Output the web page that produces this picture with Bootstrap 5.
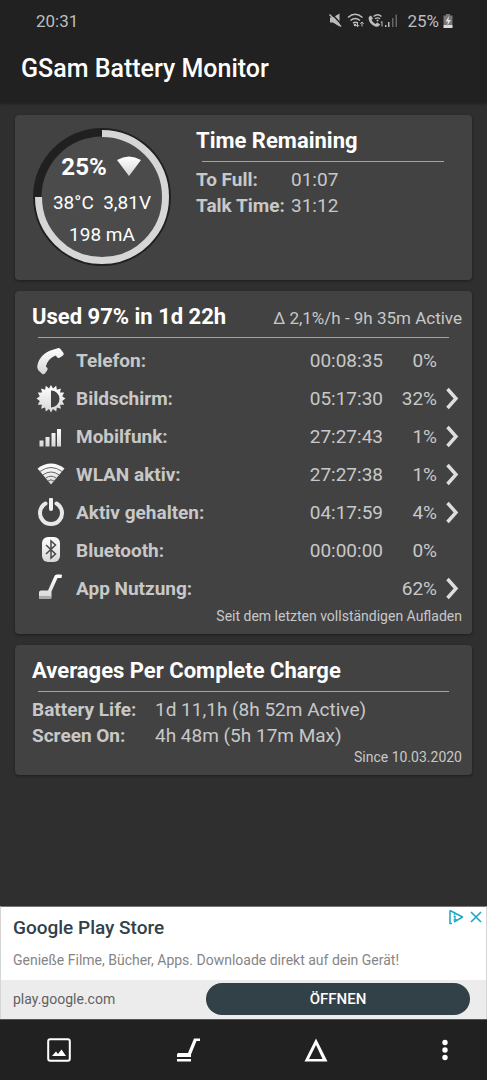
<!DOCTYPE html>
<html lang="de">
<head>
<meta charset="utf-8">
<meta name="viewport" content="width=device-width, initial-scale=1">
<title>GSam Battery Monitor</title>
<link href="https://cdn.jsdelivr.net/npm/bootstrap@5.3.0/dist/css/bootstrap.min.css" rel="stylesheet">
<style>
  body { background: #2f2f2f; color: #c8c8c8; font-family: Roboto, "Liberation Sans", sans-serif; font-size: 19px; line-height: 26px; }
  svg { display: block; flex: none; }
  .bar-dark { background: #212121; }
  .app-header { height: 103px; box-shadow: 0 1px 3px rgba(0,0,0,.35); }
  .status-row { height: 42px; padding: 0 34px 0 36px; font-size: 17px; color: #bdbdbd; }
  .app-title { font-size: 25px; font-weight: 500; line-height: 54px; padding-left: 21px; color: #fff; }
  .panels { padding: 12px 15px 0; gap: 11px; }
  .panel { background: #424242; border-radius: 4px; box-shadow: 0 1px 3px rgba(0,0,0,.4); padding: 0 10px 10px 17px; }
  .panel-title { font-size: 22px; font-weight: 700; line-height: 30px; color: #fff; padding: 11px 0 5px; }
  .delta { font-size: 17px; }
  .rule { height: 1px; background: #a4a4a4; margin: 0 13px 0 6px; }
  .facts { margin-top: 5px; }
  .facts th { font-weight: 700; padding: 0; }
  .facts td { padding: 0; }
  .first-panel { padding-bottom: 13px; }
  .dial { width: 140px; height: 140px; margin-top: 12px; }
  .dial-text { line-height: 32px; color: #fff; padding-top: 22px; }
  .dial-level { font-size: 24px; font-weight: 700; line-height: 36px; padding-bottom: 2px; }
  .time-left { margin-left: 24px; }
  .time-left .rule { margin-right: 18px; }
  .time-left th { width: 95px; }
  .averages th { width: 123px; }
  .usage { margin-top: 4px; }
  .usage th, .usage td { height: 38px; padding: 0; vertical-align: middle; }
  .usage th { font-weight: 700; }
  .usage .col-icon { width: 44px; padding-left: 4px; }
  .usage .col-share { width: 54px; }
  .usage .col-more { width: 25px; padding-left: 8px; }
  .note { font-size: 14px; line-height: 16px; }
  .ad { background: #fff; border: 1px solid #d5d5d5; border-top-color: #777; border-bottom: 0; font-size: 14px; }
  .ad-title { font-size: 19px; font-weight: 500; line-height: 24px; color: #324148; padding: 9px 12px 0; }
  .ad-copy { line-height: 20px; padding: 10px 12px; color: #858585; }
  .ad-foot { background: #ececec; padding: 3px 16px 4px 12px; }
  .ad-foot a { color: #616161; }
  .btn-open { width: 264px; background: #324148; color: #fff; border: 0; border-radius: 16px; height: 32px; font-size: 15px; font-weight: 500; padding: 0; }
  .ad-marks { top: 2px; right: 2px; gap: 4px; }
  .bottom-nav { height: 61px; padding: 0 30px 0 47px; border-top: 1px solid #555; }
  .bare { background: none; border: 0; padding: 0; color: #fff; }
</style>
</head>
<body>
<svg width="0" height="0" class="position-absolute" aria-hidden="true">
  <defs>
    <linearGradient id="shade" x1="0" y1="0" x2="0" y2="1"><stop offset="0" stop-color="#fff"/><stop offset="1" stop-color="#d6d6d6"/></linearGradient>
    <symbol id="chevron" viewBox="0 0 14 24"><path d="M2.500 2l8.500 9.500L2.500 21" fill="none" stroke="#dedede" stroke-width="3.400"/></symbol>
  </defs>
</svg>
<div class="d-flex flex-column min-vh-100">
  <header class="app-header bar-dark">
    <div class="status-row d-flex align-items-center justify-content-between">
      <span>20:31</span>
      <div class="d-flex align-items-center">
        <svg width="70" height="16" viewBox="0 0 70 16" aria-hidden="true">
          <path d="M1 4.500h3l6.500-4v13L4 9.500H1z" fill="#bdbdbd"/><path d="M2 0l11 12" stroke="#212121" stroke-width="1.500"/><path d="M.5 1.500l11.500 12" stroke="#bdbdbd" stroke-width="1.500"/>
          <g fill="none" stroke="#bdbdbd" stroke-width="1.500"><path d="M19 4.500q7-6.500 14.500 0M21.500 7.500q4.700-4 9.500 0M24 10.200q2.500-2 5 0"/><path d="M28.500 9v4.500m-1.700-1.500l1.700 1.700 1.700-1.700M33 13.500V9m-1.700 1.700L33 9l1.700 1.700" stroke-width="1"/></g>
          <circle cx="26" cy="12" r="1.300" fill="#bdbdbd"/>
          <path d="M42 2.500l2 3-1.400 1.600q1.200 2.700 3.800 3.900L48.200 9.500l3 2q-1.800 3-5 2Q40 11 39.500 5 39.800 3 42 2.500z" fill="#bdbdbd"/>
          <path d="M44.500 3.500q4.200-3.500 8 0M46 5.800q2.500-2 5 0" fill="none" stroke="#bdbdbd" stroke-width="1.300"/><circle cx="48.500" cy="7.500" r="1" fill="#bdbdbd"/>
          <path d="M51.800 9.500l1.200-1v5" fill="none" stroke="#bdbdbd"/>
          <path d="M56 12h1.500v2H56zM59 9h1.500v5H59z" fill="#bdbdbd"/><path d="M63 5h1.500v9H63zM66.500 1.500H68V14h-1.500z" fill="#666"/>
        </svg>
        <span class="ms-1 ps-1">25%</span>
        <svg class="ms-1" width="10" height="14" viewBox="0 0 10 14" aria-hidden="true"><path d="M3 0h4v1.500h2.500V11H.5V1.500H3z" fill="#777"/><path d="M.5 11h9v3h-9zM6 2L2.500 7.500H5L4 12l4-6H5.500z" fill="#ddd"/></svg>
      </div>
    </div>
    <h1 class="app-title mb-0">GSam Battery Monitor</h1>
  </header>

  <main class="panels d-flex flex-column">
    <section class="panel first-panel d-flex">
      <div class="dial position-relative">
        <svg class="position-absolute top-0 start-0" width="140" height="140" viewBox="0 0 140 140" aria-hidden="true">
          <circle cx="70" cy="70" r="69" fill="#202020"/>
          <circle cx="70" cy="70" r="60.500" fill="#4b4b4b"/>
          <path d="M70 6.500A63.500 63.500 0 1 1 6.500 70" fill="none" stroke="#d6d6d6" stroke-width="7"/>
        </svg>
        <div class="dial-text position-relative text-center">
          <div class="dial-level d-flex align-items-center justify-content-center gap-2">25%
            <svg width="28" height="22" viewBox="0 0 28 22" aria-hidden="true"><path d="M2 4Q14-3 26 4L14 20z" fill="url(#shade)"/></svg>
          </div>
          <div>38°C&nbsp; 3,81V</div>
          <div>198 mA</div>
        </div>
      </div>
      <div class="time-left flex-grow-1">
        <h2 class="panel-title mb-0">Time Remaining</h2>
        <div class="rule"></div>
        <table class="facts w-100">
          <tr><th scope="row">To Full:</th><td>01:07</td></tr>
          <tr><th scope="row">Talk Time:</th><td>31:12</td></tr>
        </table>
      </div>
    </section>

    <section class="panel">
      <div class="d-flex justify-content-between align-items-baseline">
        <h2 class="panel-title mb-0">Used 97% in 1d 22h</h2>
        <span class="delta">Δ 2,1%/h - 9h 35m Active</span>
      </div>
      <div class="rule"></div>
      <table class="usage w-100">
        <tr>
          <td class="col-icon"><svg width="30" height="30" viewBox="0 0 30 30" aria-hidden="true"><path d="M21 2.500q2-1.200 3.500.5l3 4q.8 1.800-.8 2.800l-3.200 2q-1.700.7-2.600-.8L19.700 9.500Q12 12.500 9.800 20.500l1.400 1.300q1 1.300 0 2.500L9 27.500q-1.400 1.500-3 .2L2.500 24.500Q.8 22.500 1.300 20 3.500 6.500 21 2.500z" fill="url(#shade)"/></svg></td>
          <th scope="row">Telefon:</th><td class="text-end">00:08:35</td><td class="col-share text-end">0%</td><td class="col-more"></td>
        </tr>
        <tr>
          <td class="col-icon"><svg width="30" height="30" viewBox="0 0 30 30" aria-hidden="true"><path d="M15 1l2 3.500 3.200-2.700.7 4 4-1.300-.9 4 4.200.1-2 3.600 3.300 2.300-3.300 2.600 2 3.600-4.200.1.900 4-4-1.300-.7 4-3.200-2.500-2 3.500-2-3.500-3.200 2.500-.7-4-4 1.300.9-4-4.200-.1 2-3.600L.5 14.500l3.300-2.300-2-3.600L6 8.500l-.9-4 4 1.300.7-4L13 4.500z" fill="url(#shade)"/><path d="M15 6.500a8.500 8.500 0 0 1 0 17z" fill="#424242"/></svg></td>
          <th scope="row">Bildschirm:</th><td class="text-end">05:17:30</td><td class="col-share text-end">32%</td><td class="col-more"><a href="#" aria-label="Bildschirm"><svg width="14" height="24"><use href="#chevron"/></svg></a></td>
        </tr>
        <tr>
          <td class="col-icon"><svg width="30" height="30" viewBox="0 0 30 30" aria-hidden="true"><path d="M3.500 18.500h4v6h-4zM9.500 15h4v9.500h-4zM15.500 11h4v13.500h-4zM21 7h4v17.500h-4z" fill="url(#shade)"/></svg></td>
          <th scope="row">Mobilfunk:</th><td class="text-end">27:27:43</td><td class="col-share text-end">1%</td><td class="col-more"><a href="#" aria-label="Mobilfunk"><svg width="14" height="24"><use href="#chevron"/></svg></a></td>
        </tr>
        <tr>
          <td class="col-icon"><svg width="30" height="30" viewBox="0 0 30 30" aria-hidden="true"><path d="M1.500 8.500Q15-1.500 28.500 8.500L15 24.500z" fill="url(#shade)"/><path d="M4 11.500Q15 3.500 26 11.500M7 14.800q8-5.600 16 0M9.800 18q5.200-3.600 10.400 0M12 21q3-2.400 6 0" fill="none" stroke="#666" stroke-width="1"/></svg></td>
          <th scope="row">WLAN aktiv:</th><td class="text-end">27:27:38</td><td class="col-share text-end">1%</td><td class="col-more"><a href="#" aria-label="WLAN aktiv"><svg width="14" height="24"><use href="#chevron"/></svg></a></td>
        </tr>
        <tr>
          <td class="col-icon"><svg width="30" height="30" viewBox="0 0 30 30" aria-hidden="true"><path d="M9.500 5.500a11 11 0 1 0 11 0" fill="none" stroke="#e8e8e8" stroke-width="4" stroke-linecap="round"/><path d="M15 1.500v9.500" stroke="#f2f2f2" stroke-width="4" stroke-linecap="round"/></svg></td>
          <th scope="row">Aktiv gehalten:</th><td class="text-end">04:17:59</td><td class="col-share text-end">4%</td><td class="col-more"><a href="#" aria-label="Aktiv gehalten"><svg width="14" height="24"><use href="#chevron"/></svg></a></td>
        </tr>
        <tr>
          <td class="col-icon"><svg width="30" height="30" viewBox="0 0 30 30" aria-hidden="true"><rect x="6" y="1" width="18" height="25" rx="6" fill="url(#shade)"/><path d="M10 9l9.500 9L15 22V5l4.500 4L10 18" fill="none" stroke="#484848" stroke-width="1.500"/></svg></td>
          <th scope="row">Bluetooth:</th><td class="text-end">00:00:00</td><td class="col-share text-end">0%</td><td class="col-more"></td>
        </tr>
        <tr>
          <td class="col-icon"><svg width="30" height="30" viewBox="0 0 30 30" aria-hidden="true"><path d="M26 1l-.5 3h-4L15.500 17.500v6q0 1.500-1.500 1.500H3.500L3 23.500V18q.5-1.500 2-1.500h7L18.500 2Q19 .5 21 .5h4z" fill="url(#shade)"/><path d="M3 22h12v3H3z" fill="#aaa"/></svg></td>
          <th scope="row">App Nutzung:</th><td></td><td class="col-share text-end">62%</td><td class="col-more"><a href="#" aria-label="App Nutzung"><svg width="14" height="24"><use href="#chevron"/></svg></a></td>
        </tr>
      </table>
      <div class="note text-end">Seit dem letzten vollständigen Aufladen</div>
    </section>

    <section class="panel">
      <h2 class="panel-title mb-0">Averages Per Complete Charge</h2>
      <div class="rule"></div>
      <table class="facts averages w-100">
        <tr><th scope="row">Battery Life:</th><td>1d 11,1h (8h 52m Active)</td></tr>
        <tr><th scope="row">Screen On:</th><td>4h 48m (5h 17m Max)</td></tr>
      </table>
      <div class="note text-end">Since 10.03.2020</div>
    </section>
  </main>

  <aside class="ad position-relative mt-auto">
    <div class="ad-marks position-absolute d-flex">
      <button class="bare" aria-label="Info zur Anzeige"><svg width="16" height="16" viewBox="0 0 16 16"><path d="M2 1.500v13h2M2 1.500L14.500 8 6 13.200" fill="none" stroke="#1ba6c4" stroke-width="1.500" stroke-linejoin="round"/><path d="M6.500 4.500v1.500M5.500 7.500h1.500V11M5.500 11H9" stroke="#1ba6c4" stroke-width="1.300" fill="none"/></svg></button>
      <button class="bare" aria-label="Anzeige schließen"><svg width="16" height="16" viewBox="0 0 16 16"><path d="M3 3l10 10M13 3L3 13" stroke="#1ba6c4" stroke-width="1.600"/></svg></button>
    </div>
    <div class="ad-title">Google Play Store</div>
    <div class="ad-copy">Genieße Filme, Bücher, Apps. Downloade direkt auf dein Gerät!</div>
    <div class="ad-foot d-flex align-items-center justify-content-between">
      <a href="#" class="text-decoration-none">play.google.com</a>
      <button class="btn btn-open">ÖFFNEN</button>
    </div>
  </aside>

  <nav class="bottom-nav bar-dark d-flex align-items-center justify-content-between">
    <button class="bare" aria-label="Diagramm"><svg width="24" height="24" viewBox="0 0 24 24"><rect x="1.200" y="1.200" width="21.600" height="21.600" rx="2" fill="none" stroke="#fff" stroke-width="2"/><path d="M5 18l4-4.500 2 2.500 3.500-4.500L19 18z" fill="#fff"/></svg></button>
    <button class="bare" aria-label="App-Nutzung"><svg width="24" height="24" viewBox="0 0 24 24"><path d="M24 .5V3h-3.500L15 16.500V19H1v-2.500Q1 15 2.500 15h9.500L18 .5zM1 21h14v2.500H1z" fill="#fff"/></svg></button>
    <button class="bare" aria-label="Delta"><svg width="24" height="24" viewBox="0 0 24 24"><path d="M12 .5L23.500 23.500H.5zM12 7L5 21h13.500z" fill="#fff" fill-rule="evenodd"/></svg></button>
    <button class="bare" aria-label="Menü"><svg width="24" height="24" viewBox="0 0 24 24" fill="#fff"><circle cx="12" cy="4.500" r="2.700"/><circle cx="12" cy="12" r="2.700"/><circle cx="12" cy="19.500" r="2.700"/></svg></button>
  </nav>
</div>
<script src="https://cdn.jsdelivr.net/npm/bootstrap@5.3.0/dist/js/bootstrap.bundle.min.js"></script>
</body>
</html>
